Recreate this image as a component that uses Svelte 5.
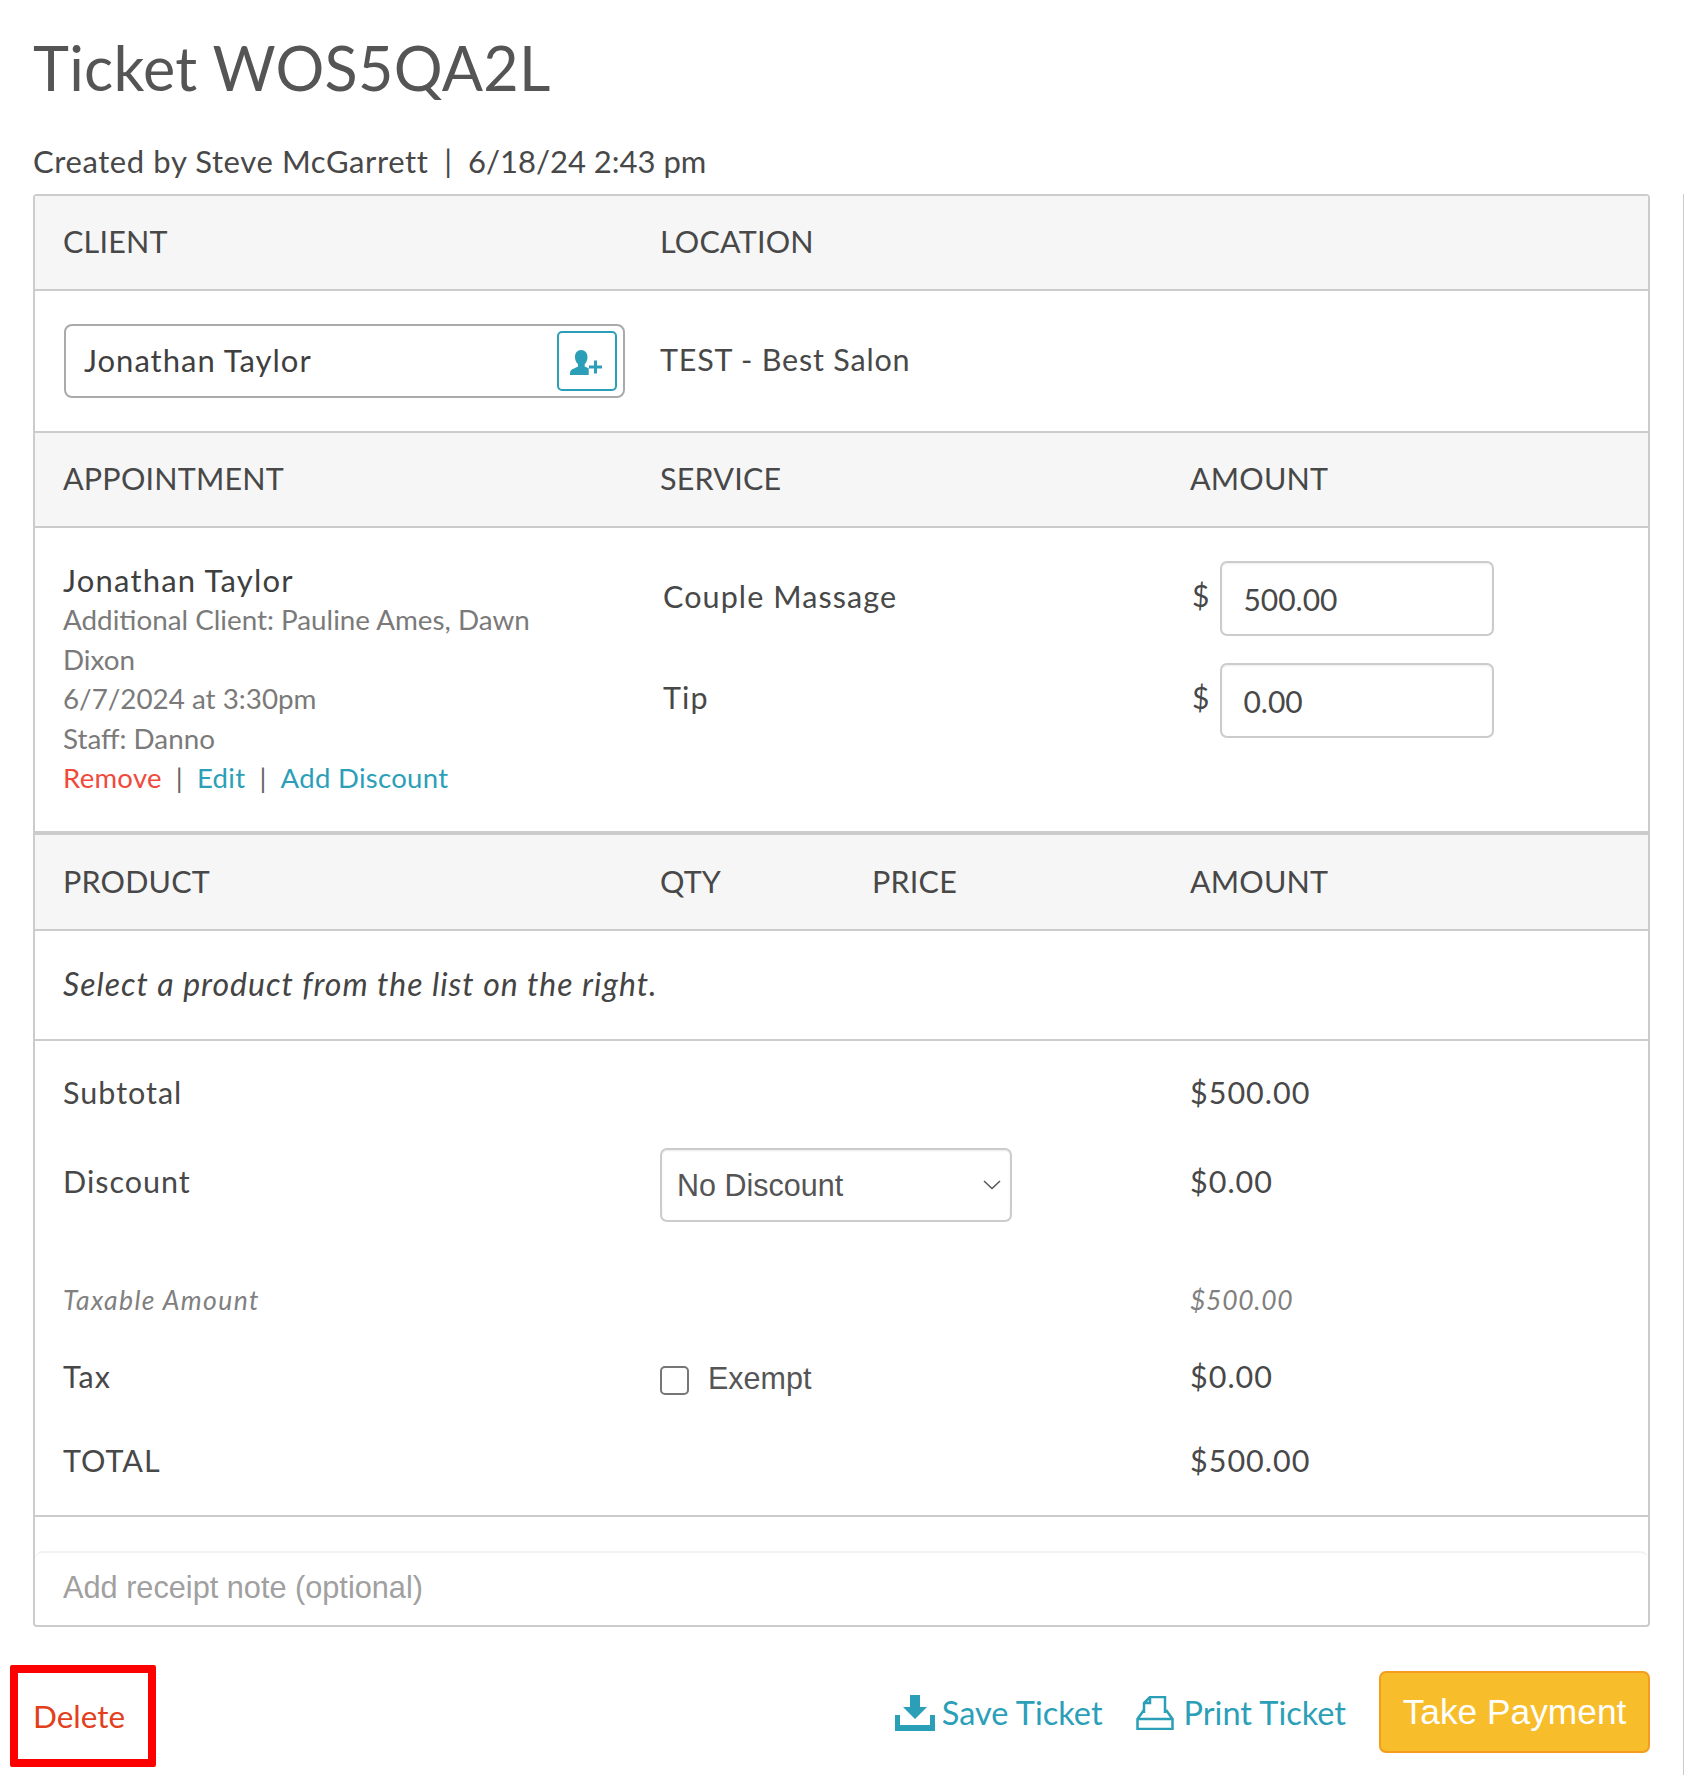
<script lang="ts">
  const amounts = [
    { label: 'Couple Massage', value: '500.00' },
    { label: 'Tip', value: '0.00' },
  ]
</script>

<div class="page">
  <h1>Ticket WOS5QA2L</h1>
  <p class="meta"><span class="by">Created by Steve McGarrett</span> &nbsp;|&nbsp; 6/18/24 2:43 pm</p>

  <div class="ticket">
    <div class="head row-loc">
      <span>CLIENT</span>
      <span>LOCATION</span>
    </div>
    <div class="client-row row-loc">
      <div class="client-box">
        <span>Jonathan Taylor</span>
        <button class="add-client" aria-label="Add client">
          <svg width="32" height="26" viewBox="0 0 32 26">
            <path d="M11 0c4 0 6.500 3 6.500 7 0 3-1 5.500-2.800 7.200v2.300l4 1.800V25H0v-1.800c0-2.500 1.500-3.600 4-4.600l4-2v-2.400C6.100 12.500 5 10 5 7c0-4 2.300-7 6-7z" fill="#2c9fb8"/>
            <path d="M24 10.500v5h-5v3h5v5h3v-5h5v-3h-5v-5z" fill="#2c9fb8"/>
          </svg>
        </button>
      </div>
      <span class="location">TEST - Best Salon</span>
    </div>

    <div class="head row-three">
      <span>APPOINTMENT</span>
      <span>SERVICE</span>
      <span>AMOUNT</span>
    </div>
    <div class="appt row-three">
      <div class="appt-info">
        <div class="name">Jonathan Taylor</div>
        <div class="sub">Additional Client: Pauline Ames, Dawn Dixon</div>
        <div class="sub">6/7/2024 at 3:30pm</div>
        <div class="sub">Staff: Danno</div>
        <div class="links">
          <a href="#remove" class="danger">Remove</a>
          <span class="sep">|</span>
          <a href="#edit">Edit</a>
          <span class="sep">|</span>
          <a href="#discount">Add Discount</a>
        </div>
      </div>
      <div class="lines">
        {#each amounts as a}
          <div class="line-label">{a.label}</div>
        {/each}
      </div>
      <div class="lines">
        {#each amounts as a}
          <div class="money">
            <span>$</span>
            <input type="text" value={a.value} />
          </div>
        {/each}
      </div>
    </div>

    <div class="head row-four">
      <span>PRODUCT</span>
      <span>QTY</span>
      <span>PRICE</span>
      <span>AMOUNT</span>
    </div>
    <div class="empty">Select a product from the list on the right.</div>

    <div class="totals">
      <div class="total-row row-three subtotal">
        <span>Subtotal</span>
        <span></span>
        <span>$500.00</span>
      </div>
      <div class="total-row row-three discount">
        <span>Discount</span>
        <div class="select">
          <span>No Discount</span>
          <svg width="18" height="10" viewBox="0 0 18 10"><path d="M1 1l8 7.500L17 1" fill="none" stroke="#555" stroke-width="1.500"/></svg>
        </div>
        <span>$0.00</span>
      </div>
      <div class="total-row row-three taxable">
        <span class="taxable-label">Taxable Amount</span>
        <span></span>
        <span>$500.00</span>
      </div>
      <div class="total-row row-three tax">
        <span>Tax</span>
        <label class="exempt"><input type="checkbox" /><span>Exempt</span></label>
        <span>$0.00</span>
      </div>
      <div class="total-row row-three grand">
        <span>TOTAL</span>
        <span></span>
        <span>$500.00</span>
      </div>
    </div>

    <div class="note-wrap">
      <input class="note" type="text" placeholder="Add receipt note (optional)" />
    </div>
  </div>

  <div class="footer">
    <a href="#delete" class="delete">Delete</a>
    <div class="actions">
      <a href="#save" class="action">
        <svg width="40" height="36" viewBox="0 0 40 36">
          <path d="M15 0h10v12h7L20 24 8 12h7z" fill="#2c9fb8"/>
          <path d="M0 20h5v10h30V20h5v16H0z" fill="#2c9fb8"/>
        </svg>
        Save Ticket
      </a>
      <a href="#print" class="action print">
        <svg width="38" height="34" viewBox="0 0 38 34">
          <path d="M8 17V7l6-6h15v16M8 7h6V1" fill="none" stroke="#2c9fb8" stroke-width="2.500"/>
          <path d="M8 14L1.500 23v10h35V23L30 14M1.500 23h35" fill="none" stroke="#2c9fb8" stroke-width="2.500"/>
        </svg>
        Print Ticket
      </a>
      <button class="pay">Take Payment</button>
    </div>
  </div>
</div>

<style>
  :global(body) {
    margin: 0;
    background: #fff;
  }

  .page {
    width: 1684px;
    height: 1775px;
    box-sizing: border-box;
    padding: 0 34px 0 33px;
    font-family: Lato, 'Open Sans', sans-serif;
    color: #484848;
    position: relative;
    overflow: hidden;
  }

  .page::after {
    content: '';
    position: absolute;
    right: 0;
    top: 194px;
    bottom: 0;
    width: 1px;
    background: #ccc;
  }

  h1 {
    margin: 0;
    padding-top: 32px;
    font-size: 61px;
    line-height: 72px;
    font-weight: 400;
    letter-spacing: 0.3px;
    color: #555;
  }

  .meta {
    margin: 0;
    padding-top: 39px;
    height: 51px;
    font-size: 31px;
    line-height: 36px;
  }

  .by {
    letter-spacing: 0.6px;
  }

  .ticket {
    border: 2px solid #ccc;
    border-radius: 4px;
    height: 1433px;
    box-sizing: border-box;
  }

  .head {
    height: 95px;
    padding-bottom: 3px;
    background: #f6f6f6;
    border-bottom: 2px solid #ccc;
    box-sizing: border-box;
    align-items: center;
    font-size: 30.500px;
    letter-spacing: 0.2px;
    color: #484848;
  }

  .row-loc,
  .row-three,
  .row-four {
    display: grid;
    padding-left: 28px;
  }

  .row-loc {
    grid-template-columns: 597px 1fr;
  }

  .row-three {
    grid-template-columns: 597px 530px 1fr;
  }

  .row-four {
    grid-template-columns: 597px 212px 318px 1fr;
    height: 96px;
  }

  .client-row {
    height: 142px;
    padding-bottom: 0;
    border-bottom: 2px solid #ccc;
    box-sizing: border-box;
    align-items: center;
  }

  .client-box {
    width: 561px;
    height: 74px;
    margin-left: 1px;
    box-sizing: border-box;
    border: 2px solid #aaa;
    border-radius: 8px;
    display: flex;
    align-items: center;
    justify-content: space-between;
    padding: 0 6px 0 18px;
    font-size: 31px;
    letter-spacing: 1px;
    color: #3f3f3f;
  }

  .client-box span {
    padding-bottom: 2px;
  }

  .add-client {
    width: 60px;
    height: 60px;
    box-sizing: border-box;
    padding: 4px 2px 0 0;
    background: #fff;
    border: 2px solid #2c9fb8;
    border-radius: 5px;
    display: flex;
    align-items: center;
    justify-content: center;
  }

  .location {
    font-size: 30.500px;
    letter-spacing: 0.8px;
    padding-bottom: 4px;
  }

  .appt {
    height: 307px;
    border-bottom: 4px solid #ccc;
    box-sizing: border-box;
    padding-top: 33px;
  }

  .appt-info {
    width: 490px;
  }

  .name {
    font-size: 31px;
    line-height: 39px;
    letter-spacing: 1.200px;
    color: #3f3f3f;
  }

  .sub {
    font-size: 27.800px;
    line-height: 39.500px;
    color: #7a7a7a;
  }

  .links {
    font-size: 27.500px;
    line-height: 40px;
    letter-spacing: 0.3px;
    display: flex;
    gap: 14px;
  }

  .links a {
    color: #2c9fb8;
    text-decoration: none;
  }

  .links a.danger {
    color: #ef4a3c;
  }

  .sep {
    color: #666;
  }

  .lines {
    display: flex;
    flex-direction: column;
    gap: 27px;
  }

  .line-label {
    height: 74px;
    padding-bottom: 4px;
    box-sizing: border-box;
    display: flex;
    align-items: center;
    font-size: 30.500px;
    letter-spacing: 1.100px;
    padding-left: 3px;
  }

  .money {
    height: 75px;
    display: flex;
    align-items: center;
    gap: 11px;
    font-size: 30px;
    margin-left: 2px;
  }

  .money span {
    position: relative;
    top: -4px;
  }

  .money input {
    width: 274px;
    height: 75px;
    box-sizing: border-box;
    border: 2px solid #ccc;
    border-radius: 7px;
    padding: 0 21px;
    font: inherit;
    color: #484848;
    box-shadow: inset 0 1px 2px rgba(0, 0, 0, 0.08);
  }

  .empty {
    height: 110px;
    box-sizing: border-box;
    border-bottom: 2px solid #ccc;
    padding: 0 0 3px 28px;
    display: flex;
    align-items: center;
    font-size: 32px;
    letter-spacing: 1px;
    font-style: italic;
    color: #444;
  }

  .totals {
    height: 476px;
    box-sizing: border-box;
    border-bottom: 2px solid #ccc;
    font-size: 30.500px;
    letter-spacing: 1px;
  }

  .total-row {
    align-items: center;
  }

  .subtotal {
    height: 102px;
  }

  .discount {
    height: 74px;
    margin-top: -3px;
  }

  .select {
    width: 352px;
    height: 74px;
    margin-top: 8px;
    box-sizing: border-box;
    border: 2px solid #ccc;
    border-radius: 7px;
    display: flex;
    align-items: center;
    justify-content: space-between;
    padding: 0 9px 0 15px;
    font-family: 'Liberation Sans', Arial, sans-serif;
    font-size: 30.500px;
    letter-spacing: 0;
    color: #555;
    box-shadow: inset 0 1px 2px rgba(0, 0, 0, 0.08);
  }

  .taxable {
    margin-top: 63px;
    height: 46px;
    font-size: 26.500px;
    letter-spacing: 0.7px;
    font-style: italic;
    color: #808080;
  }

  .taxable-label {
    letter-spacing: 1.400px;
  }

  .tax {
    margin-top: 30px;
    height: 46px;
  }

  .exempt {
    display: flex;
    align-items: center;
    gap: 19px;
    margin-top: 4px;
    font-family: 'Liberation Sans', Arial, sans-serif;
    letter-spacing: 0;
    font-size: 30.500px;
    color: #555;
  }

  .exempt input {
    appearance: none;
    width: 29px;
    height: 29px;
    margin: 4px 0 0;
    border: 2px solid #767676;
    border-radius: 5px;
    background: #fff;
  }

  .grand {
    margin-top: 38px;
    height: 46px;
  }

  .note-wrap {
    padding-top: 34px;
  }

  .note {
    display: block;
    width: 100%;
    height: 75px;
    box-sizing: border-box;
    border: none;
    border-top: 2px solid #f2f2f2;
    border-radius: 8px 8px 0 0;
    padding: 0 0 3px 28px;
    font-family: 'Liberation Sans', Arial, sans-serif;
    font-size: 30.700px;
    background: transparent;
  }

  .note::placeholder {
    color: #a0a0a0;
    opacity: 1;
  }

  .footer {
    display: flex;
    justify-content: space-between;
    align-items: center;
    padding-top: 44px;
  }

  .delete {
    position: relative;
    top: 4px;
    color: #e2401c;
    font-size: 31.500px;
    text-decoration: none;
  }

  .delete::after {
    content: '';
    position: absolute;
    left: -23px;
    top: -32px;
    width: 146px;
    height: 102px;
    box-sizing: border-box;
    border: 8px solid #ff0000;
    border-radius: 2px;
  }

  .actions {
    display: flex;
    align-items: center;
  }

  .action {
    display: flex;
    align-items: center;
    gap: 7px;
    color: #2c9fb8;
    font-size: 32.500px;
    text-decoration: none;
  }

  .action svg {
    margin-top: 2px;
  }

  .print {
    margin-left: 33px;
    gap: 10px;
  }

  .pay {
    margin-left: 33px;
    width: 271px;
    height: 82px;
    box-sizing: border-box;
    background: #f7bd2b;
    border: 2px solid #f39c1f;
    border-radius: 7px;
    color: #fff;
    font-family: 'Liberation Sans', Arial, sans-serif;
    font-size: 35.300px;
  }
</style>
